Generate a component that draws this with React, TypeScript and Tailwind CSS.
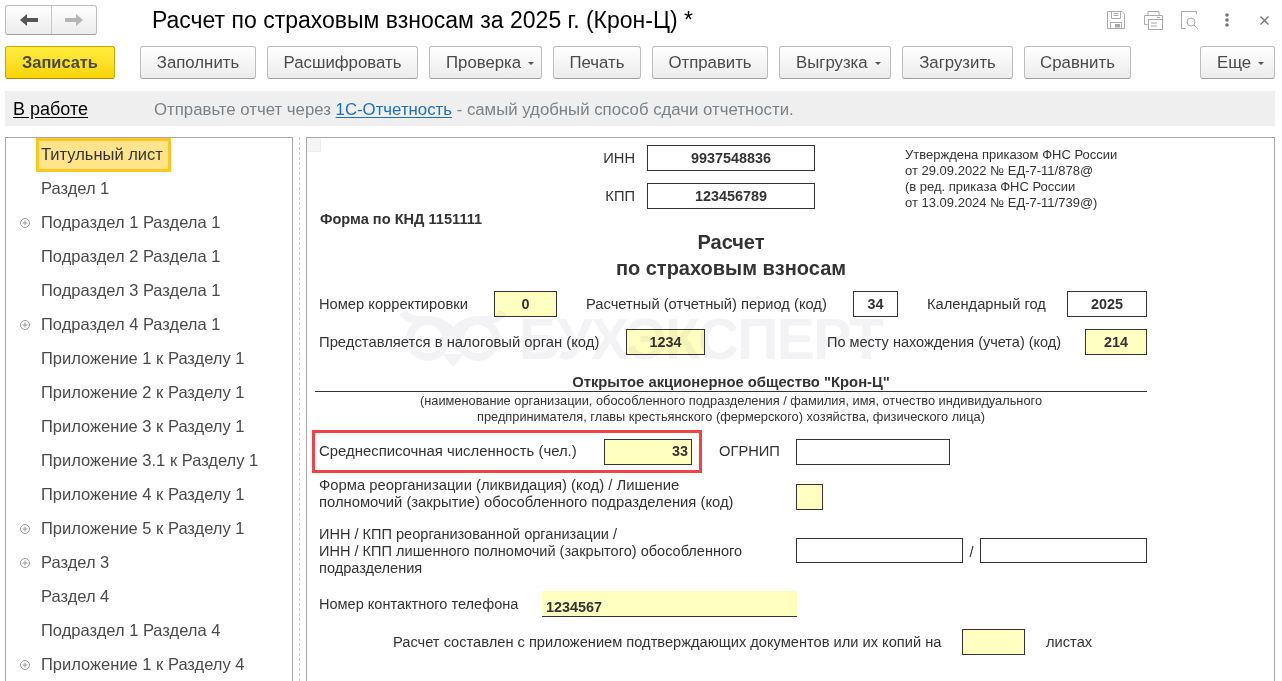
const font = { fontFamily: '"Liberation Sans", Arial, sans-serif' };

const treeItems = [
  { label: "Титульный лист", active: true },
  { label: "Раздел 1" },
  { label: "Подраздел 1 Раздела 1", plus: true },
  { label: "Подраздел 2 Раздела 1" },
  { label: "Подраздел 3 Раздела 1" },
  { label: "Подраздел 4 Раздела 1", plus: true },
  { label: "Приложение 1 к Разделу 1" },
  { label: "Приложение 2 к Разделу 1" },
  { label: "Приложение 3 к Разделу 1" },
  { label: "Приложение 3.1 к Разделу 1" },
  { label: "Приложение 4 к Разделу 1" },
  { label: "Приложение 5 к Разделу 1", plus: true },
  { label: "Раздел 3", plus: true },
  { label: "Раздел 4" },
  { label: "Подраздел 1 Раздела 4" },
  { label: "Приложение 1 к Разделу 4", plus: true },
];

function Btn({ w, label, menu }: { w: string; label: string; menu?: boolean }) {
  return (
    <button className={`${w} h-[33px] shrink-0 flex items-center rounded-[3px] border border-[#bdbdbd] border-b-[#9f9f9f] bg-gradient-to-b from-white to-[#ececec] text-[16.8px] text-[#4a4a4a] ${menu ? "justify-start pl-[16px] gap-[7px]" : "justify-center"}`}>
      {label}
      {menu && <span className="w-0 h-0 mt-[2px] border-x-[3px] border-t-[3px] border-x-transparent border-t-[#555]" />}
    </button>
  );
}

function Cell({ w, h = "h-[26px]", yellow, value, right, ml }: { w: string; h?: string; yellow?: boolean; value?: string; right?: boolean; ml?: string }) {
  return (
    <div className={`${w} ${h} ${ml ?? ""} shrink-0 border border-[#333] flex items-center pt-[1px] font-bold text-[14.4px] text-[#333] ${yellow ? "bg-[#ffffc0]" : "bg-white"} ${right ? "justify-end pr-[3px]" : "justify-center"}`}>
      {value}
    </div>
  );
}

function Label({ w, children, ml, size = "text-[14.7px]" }: { w: string; children: React.ReactNode; ml?: string; size?: string }) {
  return <div className={`${w} ${ml ?? ""} ${size} shrink-0 leading-[17px] text-[#333] whitespace-nowrap`}>{children}</div>;
}

export default function App() {
  return (
    <div style={font} className="w-[1282px] h-[681px] overflow-hidden bg-white">
      {/* Header */}
      <div className="h-[46px] flex items-start pl-[5px]">
        <div className="mt-[5px] w-[92px] h-[30px] flex rounded-[3px] border border-[#bdbdbd] border-b-[#9f9f9f] bg-gradient-to-b from-white to-[#ececec]">
          <div className="w-[46px] flex items-center justify-center border-r border-[#c8c8c8]">
            <svg width="18" height="12" viewBox="0 0 18 12"><path d="M0 6 L7 0 V4 H18 V8 H7 V12 Z" fill="#555" /></svg>
          </div>
          <div className="flex-1 flex items-center justify-center">
            <svg width="18" height="12" viewBox="0 0 18 12"><path d="M18 6 L11 0 V4 H0 V8 H11 V12 Z" fill="#b5b5b5" /></svg>
          </div>
        </div>
        <div className="ml-[55px] mt-[7px] text-[23px] leading-[27px] text-black whitespace-nowrap">Расчет по страховым взносам за 2025 г. (Крон-Ц) *</div>
        <div className="ml-auto flex items-center mt-[10px]">
          <svg width="20" height="20" viewBox="0 0 20 20" fill="none" stroke="#aaa" className="mr-[17px]">
            <path d="M1.5 1.5 H16 L18.5 4 V18.5 H1.5 Z" />
            <path d="M5.5 1.5 V8.5 H14.5 V1.5 M7.5 3.5 H12.5 M7.5 5.5 H12.5" />
            <path d="M4.5 18.5 V12.5 H15.5 V18.5" />
            <rect x="9" y="14" width="5" height="3.5" fill="#aaa" stroke="none" />
          </svg>
          <svg width="21" height="20" viewBox="0 0 21 20" fill="none" stroke="#aaa" className="mr-[16px]">
            <path d="M5 5.5 V1.5 H16 V5.5" />
            <path d="M4.5 14.5 H1.5 V5.5 H19.5 V14.5 H16.5" />
            <rect x="5.5" y="9.5" width="14" height="10" fill="#fff" />
            <path d="M8 13 H14 M8 16 H14 M14 7.5 H17" />
          </svg>
          <svg width="19" height="20" viewBox="0 0 19 20" fill="none" stroke="#aaa" className="mr-[26px]">
            <path d="M14 1.5 H1.5 V18.5 H6" />
            <path d="M14 1.5 H16.5 V4" />
            <circle cx="11" cy="12" r="4" />
            <path d="M14 15 L18 19" />
          </svg>
          <svg width="4" height="14" viewBox="0 0 4 14" className="mr-[31px]" fill="#777">
            <circle cx="2" cy="2" r="1.8" /><circle cx="2" cy="7" r="1.8" /><circle cx="2" cy="12" r="1.8" />
          </svg>
          <svg width="9" height="9" viewBox="0 0 9 9" stroke="#777" strokeWidth="1.4" className="mr-[13px]"><path d="M0.5 0.5 L8.5 8.5 M8.5 0.5 L0.5 8.5" /></svg>
        </div>
      </div>

      {/* Command bar */}
      <div className="h-[33px] flex pl-[5px] pr-[7px] gap-[11px]">
        <button className="w-[110px] h-[33px] mr-[14px] shrink-0 rounded-[3px] border border-[#c9a800] border-b-[#a58a00] bg-gradient-to-b from-[#ffec3d] to-[#fbd400] text-[16.4px] font-bold text-[#4a4a3a]">Записать</button>
        <Btn w="w-[116px]" label="Заполнить" />
        <Btn w="w-[151px]" label="Расшифровать" />
        <Btn w="w-[113px]" label="Проверка" menu />
        <Btn w="w-[88px]" label="Печать" />
        <Btn w="w-[116px]" label="Отправить" />
        <Btn w="w-[112px]" label="Выгрузка" menu />
        <Btn w="w-[111px]" label="Загрузить" />
        <Btn w="w-[107px]" label="Сравнить" />
        <div className="ml-auto"><Btn w="w-[75px]" label="Еще" menu /></div>
      </div>

      {/* Status bar */}
      <div className="mt-[12px] mx-[5px] w-[1270px] h-[35px] bg-[#efefef] flex items-center pl-[8px] pt-[2px]">
        <span className="w-[141px] text-[18px] text-black underline underline-offset-2">В работе</span>
        <span className="text-[16.8px] text-[#7a8288]">
          Отправьте отчет через <span className="text-[#1f6fb5] underline underline-offset-2">1С-Отчетность</span> - самый удобный способ сдачи отчетности.
        </span>
      </div>

      <div className="mt-[11px] ml-[5px] w-[1270px] h-[544px] flex">
        {/* Tree */}
        <div className="w-[288px] h-[560px] shrink-0 border border-[#a8a8a8] overflow-hidden">
          {treeItems.map((item) => (
            <div key={item.label} className="h-[34px] flex items-center text-[16.5px] text-[#4a4a4a]">
              <div className="w-[30px] flex justify-end pr-[6px] shrink-0">
                {item.plus && (
                  <svg width="10" height="10" viewBox="0 0 10 10" fill="none" stroke="#999"><circle cx="5" cy="5" r="4.5" /><path d="M2.5 5 H7.5 M5 2.5 V7.5" /></svg>
                )}
              </div>
              {item.active ? (
                <div className="h-[34px] w-[135px] flex items-center border-[3px] border-[#fcc820] bg-[#ffe48c] pl-[2px] pb-[2px] text-[#333] whitespace-nowrap">{item.label}</div>
              ) : (
                <div className="pl-[5px] pb-[2px]">{item.label}</div>
              )}
            </div>
          ))}
        </div>

        {/* Splitter */}
        <div className="w-[13px] shrink-0 flex justify-center">
          <div className="w-0 h-full border-l border-dashed border-[#ccc]" />
        </div>

        {/* Report form */}
        <div className="relative w-[969px] h-[560px] shrink-0 border border-[#a8a8a8] overflow-hidden text-[#333]">
          <div className="absolute left-0 top-0 w-[14px] h-[14px] bg-[#f5f5f5] border-r border-b border-[#eeeeee]" />

          <div className="relative">
            {/* Requisites and approval note */}
            <div className="flex h-[101px]">
              <div className="w-[508px] shrink-0 pt-[7px]">
                <div className="flex items-center justify-end h-[26px]">
                  <span className="text-[14.7px] mr-[12px]">ИНН</span>
                  <Cell w="w-[168px]" value="9937548836" />
                </div>
                <div className="flex items-center justify-end h-[26px] mt-[12px]">
                  <span className="text-[14.7px] mr-[12px]">КПП</span>
                  <Cell w="w-[168px]" value="123456789" />
                </div>
              </div>
              <div className="w-[90px]"></div>
              <div className="pt-[9px] text-[13px] leading-[16px] whitespace-nowrap">
                Утверждена приказом ФНС России<br />
                от 29.09.2022 № ЕД-7-11/878@<br />
                (в ред. приказа ФНС России<br />
                от 13.09.2024 № ЕД-7-11/739@)
              </div>
            </div>
            <div className="-mt-[30px] h-[20px] pl-[13px] text-[14.6px] font-bold leading-[20px]">Форма по КНД 1151111</div>

            <div className="w-[848px] text-center font-bold text-[20px] leading-[26px]">
              Расчет<br />по страховым взносам
            </div>

            {/* Correction / period */}
            <div className="mt-[10px] flex items-center h-[26px] pl-[12px]">
              <Label w="w-[175px]">Номер корректировки</Label>
              <Cell w="w-[63px]" yellow value="0" />
              <Label w="w-[267px]" ml="ml-[29px]">Расчетный (отчетный) период (код)</Label>
              <Cell w="w-[45px]" value="34" />
              <Label w="w-[140px]" ml="ml-[29px]">Календарный год</Label>
              <Cell w="w-[80px]" value="2025" />
            </div>

            <div className="mt-[12px] flex items-center h-[26px] pl-[12px]">
              <Label w="w-[307px]" size="text-[14.8px]">Представляется в налоговый орган (код)</Label>
              <Cell w="w-[79px]" yellow value="1234" />
              <Label w="w-[258px]" ml="ml-[122px]" size="text-[14.5px]">По месту нахождения (учета) (код)</Label>
              <Cell w="w-[62px]" yellow value="214" />
            </div>

            {/* Organisation */}
            <div className="mt-[19px] ml-[8px] w-[832px] border-b border-[#333] text-center text-[14.8px] font-bold leading-[17px] whitespace-nowrap">Открытое акционерное общество "Крон-Ц"</div>
            <div className="ml-[8px] w-[832px] pt-[1px] text-center text-[12.8px] leading-[16px] whitespace-nowrap">
              (наименование организации, обособленного подразделения / фамилия, имя, отчество индивидуального<br />
              предпринимателя, главы крестьянского (фермерского) хозяйства, физического лица)
            </div>

            {/* Headcount */}
            <div className="mt-[5px] flex items-center">
              <div className="ml-[5px] w-[390px] h-[43px] shrink-0 border-[3px] border-[#f04444] flex items-center pl-[4px]">
                <Label w="w-[285px]" size="text-[14.9px]">Среднесписочная численность (чел.)</Label>
                <Cell w="w-[88px]" yellow right value="33" />
              </div>
              <Label w="w-[77px]" ml="ml-[17px]">ОГРНИП</Label>
              <Cell w="w-[154px]" />
            </div>

            {/* Reorganisation */}
            <div className="mt-[3px] flex pl-[12px] h-[40px]">
              <Label w="w-[477px]" ml="mt-[1px]" size="text-[14.8px]">Форма реорганизации (ликвидация) (код) / Лишение<br />полномочий (закрытие) обособленного подразделения (код)</Label>
              <Cell w="w-[27px]" h="h-[26px] mt-[8px]" yellow />
            </div>

            <div className="mt-[10px] flex pl-[12px] h-[51px]">
              <Label w="w-[477px]" size="text-[14.56px]">ИНН / КПП реорганизованной организации /<br />ИНН / КПП лишенного полномочий (закрытого) обособленного<br />подразделения</Label>
              <Cell w="w-[167px]" h="h-[25px] mt-[12px]" />
              <span className="w-[17px] mt-[15px] text-center text-[14.7px]">/</span>
              <Cell w="w-[167px]" h="h-[25px] mt-[12px]" />
            </div>

            {/* Phone */}
            <div className="mt-[14px] flex pl-[12px] h-[26px]">
              <Label w="w-[223px]" ml="mt-[5px]" size="text-[14.55px]">Номер контактного телефона</Label>
              <div className="w-[255px] h-[26px] bg-[#ffffc0] border-b border-[#333] font-bold text-[14.4px] pl-[4px] pt-[6px] leading-[20px]">1234567</div>
            </div>

            {/* Attachments */}
            <div className="mt-[12px] flex items-center h-[26px] pl-[86px]">
              <Label w="w-[569px]" size="text-[14.65px]">Расчет составлен с приложением подтверждающих документов или их копий на</Label>
              <Cell w="w-[63px]" yellow />
              <Label w="w-[60px]" ml="ml-[21px]">листах</Label>
            </div>
          </div>

          {/* Watermark lies over the form, only tinting it */}
          <div className="absolute left-[91px] top-[172px] flex items-center gap-[11px] select-none pointer-events-none mix-blend-multiply">
            <svg width="110" height="58" viewBox="0 0 110 58" fill="none" stroke="#f3f3f5" strokeWidth="8">
              <path d="M5 2 C9 9 16 10 28 10 C40 10 50 15 55 24 C60 15 70 10 82 10 C94 10 101 9 105 2" />
              <circle cx="30" cy="29" r="18" />
              <circle cx="80" cy="29" r="18" />
              <path d="M44 44 L55 57 L66 44 Z" fill="#f3f3f5" stroke="none" />
            </svg>
            <span className="text-[57px] leading-[57px] font-bold text-[#f3f3f5] tracking-[-1.5px] whitespace-nowrap">БУХЭКСПЕРТ</span>
          </div>
        </div>
      </div>
    </div>
  );
}
